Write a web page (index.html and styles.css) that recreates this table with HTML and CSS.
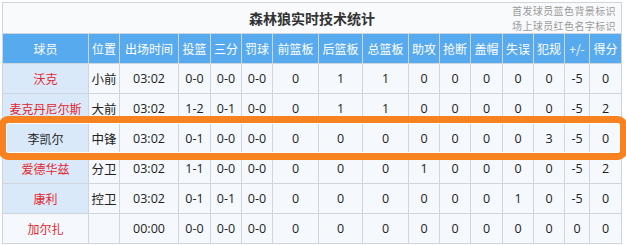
FILE: index.html
```html
<!DOCTYPE html>
<html lang="zh">
<head>
<meta charset="utf-8">
<title>森林狼实时技术统计</title>
<link rel="stylesheet" href="styles.css">
</head>
<body>
<div class="wrap">
  <table class="stats">
    <colgroup>
      <col style="width:86px"><col style="width:31px"><col style="width:59px"><col style="width:32px">
      <col style="width:31px"><col style="width:31px"><col style="width:46px"><col style="width:44px">
      <col style="width:46px"><col style="width:31px"><col style="width:31px"><col style="width:32px">
      <col style="width:31px"><col style="width:31px"><col style="width:25px"><col style="width:32px">
    </colgroup>
    <tr class="title-row">
      <td colspan="16" class="title-cell">
        <span class="title">森林狼实时技术统计</span>
        <span class="note"><span class="note-line">首发球员蓝色背景标识</span><span class="note-line">场上球员红色名字标识</span></span>
      </td>
    </tr>
    <tr class="head">
      <th>球员</th><th>位置</th><th>出场时间</th><th>投篮</th><th>三分</th><th>罚球</th><th>前篮板</th><th>后篮板</th><th>总篮板</th><th>助攻</th><th>抢断</th><th>盖帽</th><th>失误</th><th>犯规</th><th>+/-</th><th>得分</th>
    </tr>
    <tr>
      <td class="name starter oncourt">沃克</td><td>小前</td><td>03:02</td><td>0-0</td><td>0-0</td><td>0-0</td><td>0</td><td>1</td><td>1</td><td>0</td><td>0</td><td>0</td><td>0</td><td>0</td><td>-5</td><td>0</td>
    </tr>
    <tr>
      <td class="name starter oncourt">麦克丹尼尔斯</td><td>大前</td><td>03:02</td><td>1-2</td><td>0-1</td><td>0-0</td><td>0</td><td>1</td><td>1</td><td>0</td><td>0</td><td>0</td><td>0</td><td>0</td><td>-5</td><td>2</td>
    </tr>
    <tr>
      <td class="name starter">李凯尔</td><td>中锋</td><td>03:02</td><td>0-1</td><td>0-0</td><td>0-0</td><td>0</td><td>0</td><td>0</td><td>0</td><td>0</td><td>0</td><td>0</td><td>3</td><td>-5</td><td>0</td>
    </tr>
    <tr>
      <td class="name starter oncourt">爱德华兹</td><td>分卫</td><td>03:02</td><td>1-1</td><td>0-0</td><td>0-0</td><td>0</td><td>0</td><td>0</td><td>1</td><td>0</td><td>0</td><td>0</td><td>0</td><td>-5</td><td>2</td>
    </tr>
    <tr>
      <td class="name starter oncourt">康利</td><td>控卫</td><td>03:02</td><td>0-1</td><td>0-1</td><td>0-0</td><td>0</td><td>0</td><td>0</td><td>0</td><td>0</td><td>0</td><td>1</td><td>0</td><td>-5</td><td>0</td>
    </tr>
    <tr>
      <td class="name oncourt">加尔扎</td><td></td><td>00:00</td><td>0-0</td><td>0-0</td><td>0-0</td><td>0</td><td>0</td><td>0</td><td>0</td><td>0</td><td>0</td><td>0</td><td>0</td><td>0</td><td>0</td>
    </tr>
  </table>
  <div class="highlight"></div>
</div>
</body>
</html>
```
FILE: styles.css
```css
html, body {
  margin: 0;
  padding: 0;
  background: #ffffff;
}
body {
  font-family: "Noto Sans CJK SC", "Noto Sans", sans-serif;
  color: #333333;
  overflow: hidden;
}
.wrap {
  position: relative;
  padding: 2px 0 0 2px;
  width: 624px;
}
.stats {
  border-collapse: collapse;
  table-layout: fixed;
  width: 620px;
  font-size: 12px;
}
.stats td, .stats th {
  border: 1px solid #cfd5dc;
  text-align: center;
  padding: 0;
  white-space: nowrap;
  overflow: hidden;
}
.stats td {
  background: #f5f9fd;
  height: 29px;
  font-family: "Open Sans", "Noto Sans CJK SC", sans-serif;
  font-size: 12.5px;
  color: #222;
}
.stats th {
  background: #57aaee;
  color: #ffffff;
  font-weight: normal;
  font-size: 12px;
  height: 29px;
}
.stats td.title-cell {
  position: relative;
  height: 30px;
  background: #f8fafc;
}
.title {
  font-family: "Noto Sans CJK SC", sans-serif;
  font-weight: bold;
  font-size: 14px;
  color: #333;
}
.note {
  position: absolute;
  right: 5px;
  top: 1px;
  display: flex;
  flex-direction: column;
  font-family: "Noto Sans CJK SC", sans-serif;
  font-size: 10px;
  letter-spacing: 0.4px;
  color: #9a9a9a;
  text-align: left;
}
.note-line {
  display: block;
  height: 14.5px;
  line-height: 14.5px;
}
.stats td.name {
  font-family: "Noto Sans CJK SC", sans-serif;
  font-size: 12px;
}
.stats td.starter {
  background: #d9e9fa;
}
.stats td.oncourt {
  color: #e4262c;
}
.highlight {
  position: absolute;
  left: -1px;
  top: 116px;
  width: 614px;
  height: 30px;
  border: 7px solid #f7821f;
  border-radius: 9px;
  box-shadow: inset 0 0 0 1px #ffffff;
}
```
